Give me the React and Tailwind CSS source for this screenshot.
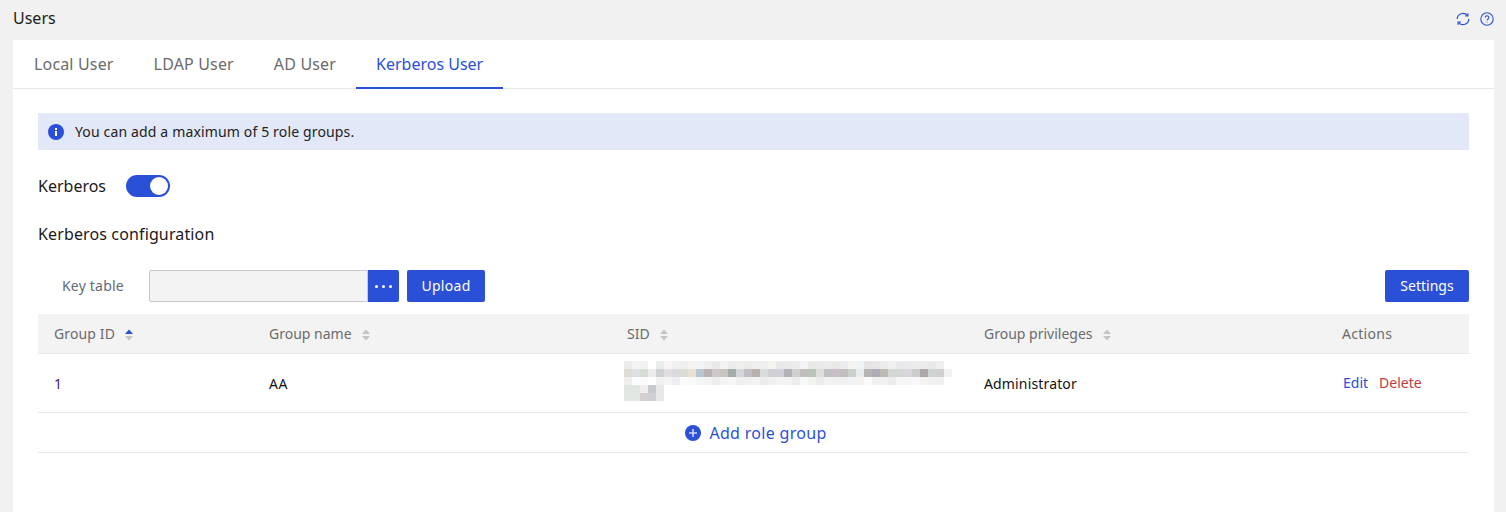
import React from "react";

const BLUE = "#2b50d8";
const F = "font-['Noto_Sans',sans-serif]";

function Sort({ active }) {
  return (
    <svg width="8" height="12" viewBox="0 0 8 12" className="ml-[10px] mt-1 shrink-0">
      <path d="M4 0.5 L8 5 H0 Z" fill={active ? BLUE : "#c4c4c4"} />
      <path d="M4 11.5 L8 7 H0 Z" fill="#c4c4c4" />
    </svg>
  );
}

const rows = [
  { y: 361, c: ["#ececec","#f4f4f2","#f0f2f0","#ffffff","#e8ecea","#f8f6f4","#f0f0f0","#eef0f0","#f6f4f0","#f2f4f6","#eef0ee","#e8e8e8","#f2f4f4","#ececec","#eeeeec","#ebebe9","#eeeeee","#eeeeee","#f4f4f0","#e8e8e8","#eaeaea","#ececec","#f2f4f6","#e8e8e6","#eaeae8","#ececec","#e8e8e6","#eaecee","#f4f4f2","#f0f4f4","#e8e4e6","#e8e6e8","#ececee","#f0f0f0","#e8e8ec","#e8eaec","#eeecea","#ecebeb","#e8e8ea","#eeeeee"] },
  { y: 369, c: ["#dcdcd4","#dfe0e4","#d6dcd4","#ececec","#cfd2d2","#e0dee0","#dadade","#dcdcd4","#e8e0d4","#b8c6d2","#b8b2b4","#ccc8cc","#c8c4c0","#a4acaa","#d4d4dc","#c0bec4","#b8b0aa","#d8dcda","#d0d0d2","#d0d0d8","#b4b0b8","#d0d0d0","#c0bebc","#b8c4b8","#dcdfdc","#c0c0c4","#c8c0c6","#c0bebe","#c8d0cc","#e8ecec","#b8b4b4","#aeaaba","#bcbcb4","#d4d8d4","#d4d6d2","#d8d6dc","#cccccc","#b0a8a8","#d0d4d0","#d0d0d0","#f0f2f2"] },
  { y: 377, c: ["#f0eeec","#fafcfe","#fafafa","#ffffff","#f0f0f0","#f6f4f2","#eceef2","#fafafa","#f8f8f6","#f4f6f6","#f2f4f4","#eeeeee","#f4f4f4","#f6f6f6","#eeeeee","#f0f0f0","#f2f2f2","#ececec","#f0f0f0","#f4f4f4","#f2f2f2","#ececec","#f6f8f8","#f2f2ee","#ececec","#f2f2f2","#f0f0f0","#f0f0f0","#f0f2f4","#f4f2f0","#fafafa","#f0f0f0","#f2f0f0","#ececec","#f4f6f8","#f6f6f4","#f8f8fa","#f6f4f0","#f0f0ee","#f0f0f0"] },
  { y: 385, c: ["#e0e6e0","#e2e6e0","#eeecec","#c8c8d0","#e6e8ea"] },
  { y: 393, c: ["#e2e8e2","#e4e8e4","#d4d0d2","#d0d0d4","#e6e8ea"] },
];

function Mosaic() {
  return (
    <svg width="328" height="40" viewBox="624 361 328 40" className="block" shapeRendering="crispEdges">
      {rows.map((r) =>
        r.c.map((c, i) => <rect key={r.y + "-" + i} x={624 + i * 8} y={r.y} width="8" height="8" fill={c} />)
      )}
    </svg>
  );
}

function Th({ label, sort, active, className }) {
  return (
    <div className={"flex items-center " + className}>
      <span>{label}</span>
      {sort && <Sort active={active} />}
    </div>
  );
}

export default function App() {
  return (
    <div className={F + " w-[1506px] h-[512px] overflow-hidden bg-[#f1f1f1] text-[14px] text-[#1f1f1f]"}>
      <div className="h-10 flex items-center justify-between pl-[13px] pr-[12px] pb-[3px]">
        <span className="text-[16px] text-[#222] mb-[2px]">Users</span>
        <div className="flex items-center gap-[10px]">
          <svg width="14" height="14" viewBox="0 0 14 14" fill="none" stroke={BLUE} strokeWidth="1.2">
            <path d="M1.2 7a5.8 5.8 0 0 1 10.2-3.6" />
            <path d="M12.8 7a5.8 5.8 0 0 1-10.2 3.6" />
            <path d="M11.9 1.2v2.6H9.3" />
            <path d="M2.1 12.8v-2.6h2.6" />
          </svg>
          <svg width="14" height="14" viewBox="0 0 14 14" fill="none" stroke={BLUE} strokeWidth="1.1">
            <circle cx="7" cy="7" r="6.2" />
            <path d="M5.2 5.5a1.8 1.8 0 1 1 2.8 1.5c-.6.4-1 .7-1 1.4" />
            <circle cx="7" cy="10.3" r=".5" fill={BLUE} stroke="none" />
          </svg>
        </div>
      </div>

      <div className="ml-[13px] w-[1481px] h-[472px] bg-white">
        <div className="h-[49px] border-b border-[#e8e8e8] flex pl-px">
          {["Local User", "LDAP User", "AD User"].map((t) => (
            <div key={t} className="h-[49px] flex items-center pb-[2px] px-5 text-[16px] tracking-[0.16px] text-[#6b6b6b]">
              {t}
            </div>
          ))}
          <div className="h-[49px] flex items-center px-5 text-[16px] text-[#2b50d8] border-b-2 border-[#2b50d8]">
            Kerberos User
          </div>
        </div>

        <div className="px-[25px] pt-6">
          <div className="h-[37px] bg-[#e2e8f7] flex items-center pl-[10px] gap-[11px]">
            <svg width="16" height="16" viewBox="0 0 16 16">
              <circle cx="8" cy="8" r="8" fill={BLUE} />
              <rect x="7" y="7" width="2" height="5" fill="#fff" />
              <rect x="7" y="4" width="2" height="2" fill="#fff" />
            </svg>
            <span className="text-[14px] tracking-[0.15px] text-[#222]">You can add a maximum of 5 role groups.</span>
          </div>

          <div className="mt-[25px] h-[22px] flex items-center">
            <span className="text-[16px] text-[#1a1a1a]">Kerberos</span>
            <div className="ml-5 w-11 h-[22px] rounded-full bg-[#2b50d8] flex items-center justify-end pr-[2px]">
              <div className="w-[18px] h-[18px] rounded-full bg-white" />
            </div>
          </div>

          <div className="mt-[26px] text-[16px] leading-[22px] tracking-[0.13px] text-[#1a1a1a]">Kerberos configuration</div>

          <div className="mt-[25px] flex items-center h-8">
            <span className="ml-6 w-[87px] pb-[2px] text-[14px] tracking-[0.2px] text-[#5f6b7a]">Key table</span>
            <div className="w-[219px] h-8 bg-[#f3f3f3] border border-[#c8c8c8] rounded-l-[2px]" />
            <div className="w-[31px] h-8 bg-[#2b50d8] rounded-r-[2px] flex items-center justify-center gap-[4px]">
              <i className="w-[3px] h-[3px] rounded-full bg-white" />
              <i className="w-[3px] h-[3px] rounded-full bg-white" />
              <i className="w-[3px] h-[3px] rounded-full bg-white" />
            </div>
            <div className="ml-2 w-[78px] h-8 pb-[2px] tracking-[0.3px] bg-[#2b50d8] rounded-[2px] text-white flex items-center justify-center">Upload</div>
            <div className="ml-auto w-[84px] h-8 pb-[2px] bg-[#2b50d8] rounded-[2px] text-white flex items-center justify-center">Settings</div>
          </div>

          <div className="mt-3 text-[14px]">
            <div className="h-10 bg-[#f3f3f3] border-b border-[#e8e8e8] flex items-center text-[#6b6b6b] pb-[1px]">
              <Th className="w-[231px] pl-4 tracking-[0.12px]" label="Group ID" sort active />
              <Th className="w-[358px]" label="Group name" sort />
              <Th className="w-[357px]" label="SID" sort />
              <Th className="w-[358px]" label="Group privileges" sort />
              <Th className="flex-1 tracking-[0.3px]" label="Actions" />
            </div>
            <div className="h-[59px] border-b border-[#e8e8e8] flex items-center">
              <div className="w-[231px] pl-4 text-[#4a2060]">1</div>
              <div className="w-[355px] text-[#111] tracking-[0.5px]">AA</div>
              <div className="w-[360px] pb-1"><Mosaic /></div>
              <div className="w-[358px] text-[#111] tracking-[0.15px]">Administrator</div>
              <div className="flex-1 flex gap-[11px] pl-[1px] pb-[2px]">
                <span className="text-[#2b50d8]">Edit</span>
                <span className="text-[#c4383f]">Delete</span>
              </div>
            </div>
            <div className="h-10 border-b border-[#e8e8e8] flex items-center justify-center pl-[5px] text-[16px] tracking-[0.3px] text-[#2b50d8] gap-2">
              <svg width="16" height="16" viewBox="0 0 16 16">
                <circle cx="8" cy="8" r="8" fill={BLUE} />
                <path d="M4 8h8M8 4v8" stroke="#cfd8f8" strokeWidth="1.6" />
              </svg>
              <span>Add role group</span>
            </div>
          </div>
        </div>
      </div>
    </div>
  );
}
